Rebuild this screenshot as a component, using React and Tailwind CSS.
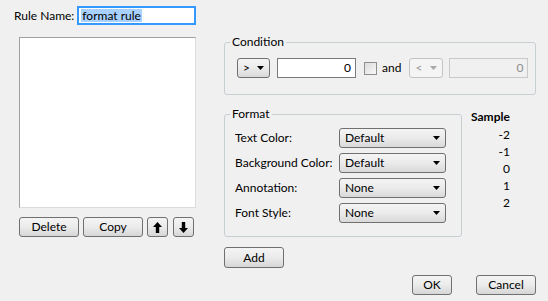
import React from 'react'

const font = { fontFamily: 'Lato, "Noto Sans", Arial, sans-serif' }

function Caret({ disabled }) {
  return (
    <svg width="7" height="4" viewBox="0 0 7 4" className="shrink-0">
      <path d="M0 0 H7 L3.5 4 Z" fill={disabled ? '#a8a8a8' : '#000'} />
    </svg>
  )
}

function Button({ className = '', children }) {
  return (
    <button
      className={`flex items-center justify-center rounded-[3px] border border-[#707070] bg-linear-to-b from-[#f4f4f4] via-[#ebebeb] to-[#d6d6d6] text-[12px] text-black leading-none ${className}`}
    >
      {children}
    </button>
  )
}

function Dropdown({ value, className = '', disabled }) {
  return (
    <div
      className={`flex items-center justify-between rounded-[3px] border h-[20px] px-[5px] text-[12px] leading-none ${
        disabled
          ? 'border-[#c4c4c4] bg-[#f4f4f4] text-[#9a9a9a]'
          : 'border-[#707070] bg-linear-to-b from-[#f4f4f4] via-[#ebebeb] to-[#d9d9d9] text-black'
      } ${className}`}
    >
      <span>{value}</span>
      <Caret disabled={disabled} />
    </div>
  )
}

function Arrow({ up }) {
  return (
    <svg width="9" height="11" viewBox="0 0 9 11" className={up ? '' : 'rotate-180'}>
      <path d="M4.5 0 L9 5 H6.2 V11 H2.8 V5 H0 Z" fill="#000" />
    </svg>
  )
}

function FormatRow({ label, value }) {
  return (
    <div className="flex items-center justify-between h-[20px] whitespace-nowrap">
      <span>{label}</span>
      <Dropdown value={value} className="w-[107px]" />
    </div>
  )
}

export default function App() {
  return (
    <div className="w-[548px] h-[301px] bg-[#f0f0f0] text-[12px] text-black flex flex-col overflow-hidden" style={font}>
      {/* Rule name */}
      <div className="flex items-center pl-[14px] pt-[6px]">
        <span className="mr-[3px]">Rule Name:</span>
        <div className="w-[119px] h-[19px] border-2 border-[#3399ff] bg-white flex items-center pl-[2px]">
          <span className="bg-[#a8d1ff] leading-[13px] px-[1px]">format rule</span>
        </div>
      </div>

      <div className="flex mt-[12px]">
        {/* Left column */}
        <div className="pl-[19px] flex flex-col">
          <div className="w-[177px] h-[171px] bg-white border border-[#dcdcdc] border-t-[#a0a0a0] border-l-[#a0a0a0]" />
          <div className="flex items-center mt-[9px] h-[20px]">
            <Button className="w-[60px] h-[20px]">Delete</Button>
            <Button className="w-[60px] h-[20px] ml-[4px]">Copy</Button>
            <Button className="w-[21px] h-[20px] ml-[4px]"><Arrow up /></Button>
            <Button className="w-[21px] h-[20px] ml-[5px]"><Arrow /></Button>
          </div>
        </div>

        {/* Right column */}
        <div className="ml-[28px] -mt-[2px] flex flex-col">
          <fieldset className="w-[312px] border border-[#c8cfd3] rounded-[3px] pt-[9px] pb-[16px] pl-[12px]">
            <legend className="-ml-[7px] px-[2px] leading-[14px]">Condition</legend>
            <div className="flex items-center h-[20px]">
              <Dropdown value=">" className="w-[33px]" />
              <div className="w-[79px] h-[20px] ml-[7px] border border-[#7a7a7a] bg-white flex items-center justify-end pr-[4px]">0</div>
              <div className="w-[13px] h-[13px] ml-[8px] border border-[#8e8f8f] bg-linear-to-br from-[#dcdcdc] to-[#f8f8f8]" />
              <span className="ml-[5px]">and</span>
              <Dropdown value="<" className="w-[34px] ml-[8px]" disabled />
              <div className="w-[79px] h-[20px] ml-[6px] border border-[#c9c9c9] bg-[#f0f0f0] text-[#8d8d8d] flex items-center justify-end pr-[4px]">0</div>
            </div>
          </fieldset>

          <div className="flex mt-[12px]">
            <fieldset className="w-[238px] border border-[#c8cfd3] rounded-[3px] pt-[7px] pb-[13px] pl-[10px] pr-[15px]">
              <legend className="-ml-[5px] px-[2px] leading-[14px]">Format</legend>
              <div className="flex flex-col gap-[5px]">
                <FormatRow label="Text Color:" value="Default" />
                <FormatRow label="Background Color:" value="Default" />
                <FormatRow label="Annotation:" value="None" />
                <FormatRow label="Font Style:" value="None" />
              </div>
            </fieldset>
            <div className="ml-[9px] flex flex-col items-end leading-[17px] pt-[1px]">
              <span className="font-bold">Sample</span>
              <span className="mt-[1px]">-2</span>
              <span>-1</span>
              <span>0</span>
              <span>1</span>
              <span>2</span>
            </div>
          </div>

          <Button className="w-[60px] h-[21px] mt-[10px]">Add</Button>
        </div>
      </div>

      {/* Dialog buttons */}
      <div className="flex justify-end pr-[12px] mt-[7px]">
        <Button className="w-[40px] h-[20px]">OK</Button>
        <Button className="w-[60px] h-[20px] ml-[24px]">Cancel</Button>
      </div>
    </div>
  )
}
